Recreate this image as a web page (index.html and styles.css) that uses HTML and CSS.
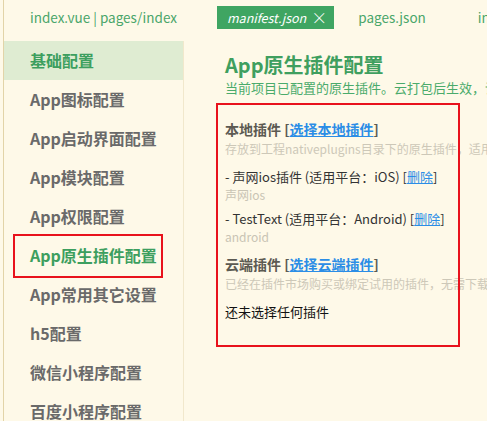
FILE: index.html
```html
<!DOCTYPE html>
<html lang="zh-CN">
<head>
<meta charset="utf-8">
<title>manifest.json</title>
<link rel="stylesheet" href="styles.css">
</head>
<body>
<div class="app">
  <div class="tabbar">
    <div class="tab">index.vue | pages/index</div>
    <div class="tab tab-active"><span class="tab-name">manifest.json</span><span class="tab-close">×</span></div>
    <div class="tab tab-3">pages.json</div>
    <div class="tab tab-4">index.vue</div>
  </div>
  <div class="main">
    <nav class="sidebar">
      <div class="nav-item nav-selected">基础配置</div>
      <div class="nav-item">App图标配置</div>
      <div class="nav-item">App启动界面配置</div>
      <div class="nav-item">App模块配置</div>
      <div class="nav-item">App权限配置</div>
      <div class="nav-item nav-current">App原生插件配置<span class="mark mark-nav"></span></div>
      <div class="nav-item">App常用其它设置</div>
      <div class="nav-item">h5配置</div>
      <div class="nav-item">微信小程序配置</div>
      <div class="nav-item">百度小程序配置</div>
    </nav>
    <section class="content">
      <h1 class="title">App原生插件配置</h1>
      <p class="subtitle">当前项目已配置的原生插件。云打包后生效，请在插件市场选择插件后再提交云端打包。</p>
      <div class="plugins">
        <span class="mark mark-box"></span>
        <h2 class="sec-head">本地插件 [<a class="link" href="#">选择本地插件</a>]</h2>
        <p class="desc">存放到工程nativeplugins目录下的原生插件，适用于离线打包和自定义调试基座</p>
        <p class="item">- 声网ios插件 (适用平台：iOS) [<a class="link" href="#">删除</a>]</p>
        <p class="sub">声网ios</p>
        <p class="item item-2">- TestText (适用平台：Android) [<a class="link" href="#">删除</a>]</p>
        <p class="sub">android</p>
        <h2 class="sec-head sec-cloud">云端插件 [<a class="link" href="#">选择云端插件</a>]</h2>
        <p class="desc">已经在插件市场购买或绑定试用的插件，无需下载到本地，云端打包时自动集成</p>
        <p class="empty">还未选择任何插件</p>
      </div>
    </section>
  </div>
</div>
</body>
</html>
```
FILE: styles.css
```css
* { box-sizing: border-box; }
html, body { margin: 0; padding: 0; }
body {
  background: #fef9e8;
  font-family: "Noto Sans CJK SC", "Noto Sans", sans-serif;
  padding-left: 3px;
  overflow: hidden;
  height: 421px;
}
.app {
  border-left: 1px solid #e2d4a8;
  height: 421px;
  display: flex;
  flex-direction: column;
}
.tabbar {
  height: 41px;
  display: flex;
  align-items: flex-start;
  padding: 6px 0 0 15px;
  white-space: nowrap;
  overflow: hidden;
  flex: none;
}
.tab {
  height: 23px;
  line-height: 23px;
  padding: 0 11px;
  font-size: 13.5px;
  color: #4aa66a;
  flex: none;
}
.tab-active {
  margin-left: 29px;
  background: #3fa562;
  color: #fff;
  display: flex;
  align-items: center;
  gap: 5px;
  padding: 0 7px 0 10px;
}
.tab-3 { margin-left: 13px; }
.tab-4 { margin-left: 30px; }
.tab-name { font-style: italic; font-size: 12.5px; }
.tab-close { font-size: 16px; font-weight: 300; line-height: 23px; }
.main {
  display: flex;
  flex: 1;
  min-height: 0;
}
.sidebar {
  width: 180px;
  flex: none;
  border-right: 1px solid #f1e8cc;
}
.nav-item {
  position: relative;
  height: 39px;
  line-height: 39px;
  padding-left: 26px;
  font-size: 16px;
  font-weight: 700;
  color: #6a6a6a;
  white-space: nowrap;
}
.nav-selected {
  background: #dfecd2;
  color: #3d9f5f;
}
.nav-current { color: #3d9f5f; }
.mark {
  position: absolute;
  border: 2px solid #e8121c;
  pointer-events: none;
}
.mark-nav {
  left: 9px;
  top: -2px;
  width: 150px;
  height: 44px;
}
.content {
  flex: 1;
  min-width: 0;
  padding: 10px 0 0 41px;
  white-space: nowrap;
  overflow: hidden;
}
.title {
  margin: 0;
  font-size: 20px;
  line-height: 28px;
  font-weight: 700;
  color: #3f9f5f;
}
.subtitle {
  margin: 0;
  font-size: 13px;
  line-height: 18px;
  color: #4aab6b;
}
.plugins {
  position: relative;
  padding-top: 22px;
}
.mark-box {
  left: -9px;
  top: 6px;
  width: 244px;
  height: 244px;
}
.sec-head {
  margin: 0;
  font-size: 14px;
  line-height: 20px;
  font-weight: 700;
  color: #5c5a52;
}
.sec-cloud { margin-top: 9px; }
.link {
  color: #2b8de6;
  text-decoration: underline;
}
.desc {
  margin: 1px 0 0;
  font-size: 12px;
  line-height: 18px;
  color: #cdc8b8;
}
.item {
  margin: 9px 0 0;
  font-size: 13px;
  line-height: 20px;
  color: #333;
}
.item-2 { margin-top: 6px; }
.sub {
  margin: 0;
  font-size: 12px;
  line-height: 16px;
  color: #c9c4b4;
}
.empty {
  margin: 9px 0 0;
  font-size: 13px;
  line-height: 20px;
  color: #111;
}
```
